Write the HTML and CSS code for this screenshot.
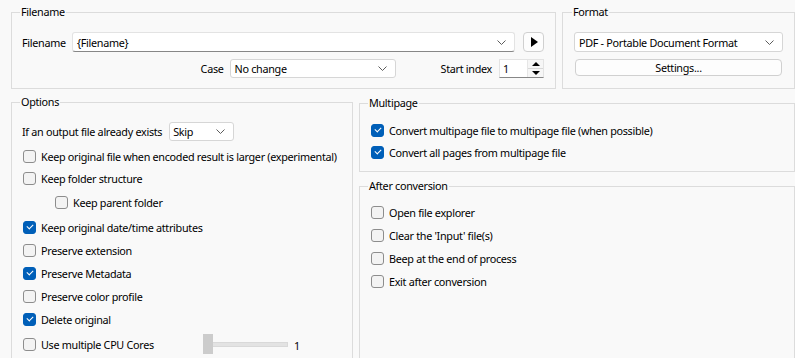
FILE: index.html
```html
<!DOCTYPE html>
<html lang="en">
<head>
  <meta charset="UTF-8">
  <title>Conversion options</title>
  <link rel="stylesheet" href="styles.css">
</head>
<body>
  <div class="top">
    <fieldset class="group group-filename">
      <legend>Filename</legend>
      <div class="row">
        <span class="label-name">Filename</span>
        <div class="combo combo-edit combo-filename">
          <span>{Filename}</span>
          <svg class="chev" width="9" height="5" viewBox="0 0 9 5"><path d="M0.5 0.5 L4.5 4.5 L8.5 0.5" fill="none" stroke="#5c5c5c"/></svg>
        </div>
        <div class="play-btn"><span class="tri-right"></span></div>
      </div>
      <div class="row row-end">
        <span>Case</span>
        <div class="combo combo-case">
          <span>No change</span>
          <svg class="chev" width="9" height="5" viewBox="0 0 9 5"><path d="M0.5 0.5 L4.5 4.5 L8.5 0.5" fill="none" stroke="#5c5c5c"/></svg>
        </div>
        <span class="label-start">Start index</span>
        <div class="spin">
          <span class="spin-value">1</span>
          <div class="spin-arrows">
            <span class="arrow-up"></span>
            <span class="arrow-down"></span>
          </div>
        </div>
      </div>
    </fieldset>

    <fieldset class="group group-format">
      <legend>Format</legend>
      <div class="combo combo-format">
        <span>PDF - Portable Document Format</span>
        <svg class="chev" width="9" height="5" viewBox="0 0 9 5"><path d="M0.5 0.5 L4.5 4.5 L8.5 0.5" fill="none" stroke="#5c5c5c"/></svg>
      </div>
      <div class="btn-settings">Settings...</div>
    </fieldset>
  </div>

  <div class="bottom">
    <fieldset class="group group-options">
      <legend>Options</legend>
      <div class="row row-exists">
        <span>If an output file already exists</span>
        <div class="combo combo-skip">
          <span>Skip</span>
          <svg class="chev" width="9" height="5" viewBox="0 0 9 5"><path d="M0.5 0.5 L4.5 4.5 L8.5 0.5" fill="none" stroke="#5c5c5c"/></svg>
        </div>
      </div>
      <label class="check mt5"><span class="box"></span>Keep original file when encoded result is larger (experimental)</label>
      <label class="check mt2"><span class="box"></span>Keep folder structure</label>
      <label class="check check-sub mt4"><span class="box"></span>Keep parent folder</label>
      <label class="check mt5"><span class="box on"></span>Keep original date/time attributes</label>
      <label class="check mt3"><span class="box"></span>Preserve extension</label>
      <label class="check mt3"><span class="box on"></span>Preserve Metadata</label>
      <label class="check mt3"><span class="box"></span>Preserve color profile</label>
      <label class="check mt3"><span class="box on"></span>Delete original</label>
      <div class="check mt5">
        <span class="cpu-label"><span class="box"></span>Use multiple CPU Cores</span>
        <div class="slider">
          <span class="thumb"></span>
          <span class="track"></span>
        </div>
        <span class="slider-value">1</span>
      </div>
    </fieldset>

    <div class="right-col">
      <fieldset class="group group-multi">
        <legend>Multipage</legend>
        <label class="check"><span class="box on"></span>Convert multipage file to multipage file (when possible)</label>
        <label class="check mt2"><span class="box on"></span>Convert all pages from multipage file</label>
      </fieldset>
      <fieldset class="group group-after">
        <legend>After conversion</legend>
        <label class="check"><span class="box"></span>Open file explorer</label>
        <label class="check mt3"><span class="box"></span>Clear the 'Input' file(s)</label>
        <label class="check mt3"><span class="box"></span>Beep at the end of process</label>
        <label class="check mt3"><span class="box"></span>Exit after conversion</label>
      </fieldset>
    </div>
  </div>
</body>
</html>
```

FILE: styles.css
```css
body {
  margin: 0;
  background: #f9f9f9;
  font-family: 'Noto Sans', 'Liberation Sans', sans-serif;
  font-size: 10.8px;
  letter-spacing: -0.3px;
  color: #000;
  overflow: hidden;
}

.group {
  margin: 0;
  min-width: 0;
  border: 1px solid #dcdcdc;
  box-sizing: border-box;
}

.group legend {
  padding: 0 1px;
  margin-left: -2px;
  line-height: 16px;
}

/* top row */
.top {
  display: flex;
  gap: 6px;
  padding: 4px 0 0 11px;
}

.group-filename {
  width: 545px;
  padding: 12px 11px 10px 10px;
}

.group-format {
  width: 233px;
  padding: 12px 11px 10px 11px;
}

.row {
  display: flex;
  align-items: center;
}

.row-end {
  justify-content: flex-end;
  margin-top: 7px;
}

.label-name {
  width: 50px;
}

.combo {
  display: flex;
  align-items: center;
  justify-content: space-between;
  box-sizing: border-box;
  background: #fff;
  border: 1px solid #d6d6d6;
  border-radius: 3px;
  padding: 0 8px 0 4px;
}

.chev {
  flex-shrink: 0;
}

.combo-edit {
  border-color: #e3e3e3;
  border-bottom-color: #878787;
}

.combo-filename {
  width: 443px;
  height: 20px;
}

.play-btn {
  width: 21px;
  height: 20px;
  box-sizing: border-box;
  margin-left: 8px;
  border: 1px solid #d0d0d0;
  border-radius: 4px;
  background: #fdfdfd;
  display: flex;
  align-items: center;
  justify-content: center;
}

.tri-right {
  width: 0;
  height: 0;
  border-top: 5px solid transparent;
  border-bottom: 5px solid transparent;
  border-left: 7px solid #000;
  margin-left: 2px;
}

.combo-case {
  width: 166px;
  height: 19px;
  margin-left: 6px;
}

.label-start {
  margin-left: 45px;
}

.spin {
  display: flex;
  width: 45px;
  height: 19px;
  box-sizing: border-box;
  margin-left: 7px;
  background: #fff;
  border: 1px solid #e3e3e3;
  border-bottom-color: #878787;
}

.spin-value {
  flex: 1;
  padding-left: 3px;
  line-height: 17px;
}

.spin-arrows {
  width: 15px;
  display: flex;
  flex-direction: column;
  border-left: 1px solid #e6e6e6;
  background: #f6f6f6;
}

.arrow-up,
.arrow-down {
  flex: 1;
  display: flex;
  align-items: center;
  justify-content: center;
}

.arrow-up {
  border-bottom: 1px solid #d8d8d8;
}

.arrow-up::before,
.arrow-down::before {
  content: '';
  border-left: 4px solid transparent;
  border-right: 4px solid transparent;
}

.arrow-up::before {
  border-bottom: 4px solid #000;
}

.arrow-down::before {
  border-top: 4px solid #000;
}

.combo-format {
  height: 20px;
  padding-left: 4px;
}

.btn-settings {
  margin: 7px 1px 0;
  height: 17px;
  box-sizing: border-box;
  border: 1px solid #d0d0d0;
  border-radius: 4px;
  background: #fdfdfd;
  text-align: center;
  line-height: 15px;
}

/* bottom */
.bottom {
  display: flex;
  gap: 6px;
  padding: 5px 0 0 11px;
  height: 300px;
}

.group-options {
  width: 342px;
  padding: 12px 10px 10px 10px;
}

.right-col {
  width: 436px;
  display: flex;
  flex-direction: column;
  gap: 6px;
  padding-top: 1px;
}

.group-multi {
  padding: 9px 10px 9px 10px;
}

.group-after {
  flex: 1;
  padding: 8px 10px 10px 10px;
}

.combo-skip {
  width: 65px;
  height: 19px;
  margin-left: 7px;
  padding-left: 3px;
}

.check {
  display: flex;
  align-items: center;
  height: 20px;
  white-space: nowrap;
}

.check-sub {
  padding-left: 32px;
}

.box {
  flex-shrink: 0;
  width: 13px;
  height: 13px;
  box-sizing: border-box;
  margin: 0 5px 0 1px;
  border: 1px solid #8d8d8d;
  border-radius: 3px;
  background: #f3f3f3;
  position: relative;
}

.box.on {
  background: #005fb8;
  border-color: #005fb8;
}

.box.on::after {
  content: '';
  position: absolute;
  left: 3px;
  top: 2px;
  width: 5px;
  height: 3px;
  border-left: 1px solid #fff;
  border-bottom: 1px solid #fff;
  transform: rotate(-45deg);
}

.cpu-label {
  display: flex;
  align-items: center;
  width: 181px;
}

.slider {
  display: flex;
  align-items: center;
  height: 20px;
}

.thumb {
  width: 10px;
  height: 20px;
  background: #cccccc;
}

.track {
  width: 74px;
  height: 3px;
  background: #e3e3e3;
  border: 1px solid #d9d9d9;
  border-left: none;
}

.slider-value {
  margin-left: 6px;
  margin-top: 2px;
}

.mt2 { margin-top: 2px; }
.mt3 { margin-top: 3px; }
.mt4 { margin-top: 4px; }
.mt5 { margin-top: 5px; }
.mt6 { margin-top: 6px; }
```
